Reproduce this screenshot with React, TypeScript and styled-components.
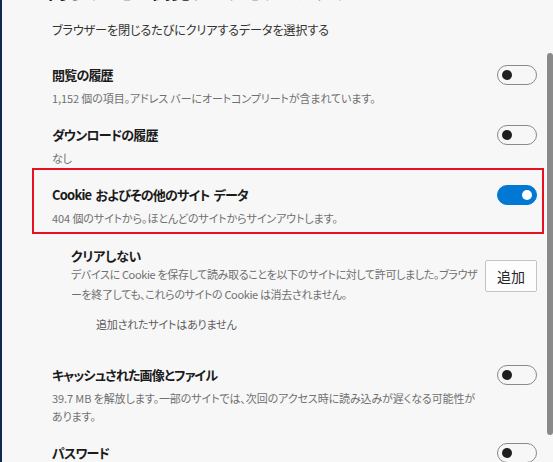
import React from "react";
import styled, { createGlobalStyle } from "styled-components";

const Global = createGlobalStyle`
  html, body { margin: 0; padding: 0; background: #f7f7f7; }
  body {
    font-family: "Noto Sans CJK JP", "Noto Sans", sans-serif;
    font-feature-settings: "palt";
    color: #1b1b1b;
    overflow: hidden;
  }
`;

const Frame = styled.div`
  display: flex;
  width: 553px;
  height: 462px;
  overflow: hidden;
  background: #f7f7f7;
`;

const EdgeStrip = styled.div`
  width: 2px;
  flex: none;
  background: #102a4c;
`;

const Content = styled.main`
  flex: 1;
  min-width: 0;
  padding: 0 3px 0 30px;
  display: flex;
  flex-direction: column;
`;

const ScrollTrack = styled.div`
  width: 6px;
  flex: none;
  padding-top: 53px;
`;

const ScrollThumb = styled.div`
  height: 382px;
  background: #8a8a8a;
  border-radius: 3px;
`;

const PageTitle = styled.h2`
  margin: -23px 0 0 16px;
  font-size: 19px;
  line-height: 28px;
  font-weight: 600;
  color: #1b1b1b;
  white-space: nowrap;
`;

const Intro = styled.p`
  margin: 15px 0 6.5px 20px;
  font-size: 12.2px;
  line-height: 20px;
  letter-spacing: -0.2px;
  color: #333;
`;

const Row = styled.section<{ $highlighted?: boolean }>`
  display: grid;
  grid-template-columns: 1fr auto;
  column-gap: 16px;
  align-items: start;
  padding: ${(p) => (p.$highlighted ? "15px 5px 5px 18px" : "18px 7px 0 20px")};
  border: ${(p) => (p.$highlighted ? "2px solid #e81123" : "none")};
  margin-top: ${(p) => (p.$highlighted ? "1.5px" : "0")};
`;

const Texts = styled.div`
  display: flex;
  flex-direction: column;
  gap: 4px;
  min-width: 0;
`;

const Title = styled.div`
  font-size: 13px;
  line-height: 20px;
  font-weight: 600;
  letter-spacing: -0.8px;
  word-spacing: 2px;
  color: #1b1b1b;
`;

const Sub = styled.div`
  font-size: 11px;
  line-height: 18px;
  letter-spacing: -0.1px;
  color: #707070;
`;

const Toggle = styled.div<{ $on?: boolean }>`
  width: 40px;
  height: 20px;
  box-sizing: border-box;
  border-radius: 10px;
  border: 1px solid ${(p) => (p.$on ? "#0078d4" : "#8a8a8a")};
  background: ${(p) => (p.$on ? "#0078d4" : "transparent")};
  display: flex;
  align-items: center;
  justify-content: ${(p) => (p.$on ? "flex-end" : "flex-start")};
  padding: 0 4px;
  &::after {
    content: "";
    width: 10px;
    height: 10px;
    border-radius: 50%;
    background: ${(p) => (p.$on ? "#ffffff" : "#1f1f1f")};
  }
`;

const SubSection = styled.section`
  padding: 14px 7px 12.5px 39px;
  display: flex;
  flex-direction: column;
`;

const ExceptionHead = styled.div`
  display: flex;
  align-items: center;
  gap: 0;
`;

const ExceptionTexts = styled.div`
  flex: 1;
  min-width: 0;
`;

const ExceptionTitle = styled.div`
  font-size: 13px;
  line-height: 16px;
  font-weight: 600;
  letter-spacing: -0.3px;
  color: #1b1b1b;
`;

const ExceptionDesc = styled.div`
  font-size: 11px;
  line-height: 20px;
  letter-spacing: -0.35px;
  color: #707070;
`;

const AddButton = styled.button`
  width: 52px;
  height: 32px;
  flex: none;
  box-sizing: border-box;
  border: 1px solid #c4c4c4;
  border-radius: 2px;
  background: #fdfdfd;
  font-family: inherit;
  font-feature-settings: "palt";
  font-size: 14px;
  color: #262626;
  padding: 0;
`;

const EmptyNote = styled.div`
  margin: 10px 0 0 25px;
  font-size: 11px;
  line-height: 20px;
  letter-spacing: -0.2px;
  color: #5c5c5c;
`;

type Item = { title: string; sub: string; on?: boolean; highlighted?: boolean };

const itemsTop: Item[] = [
  { title: "閲覧の履歴", sub: "1,152 個の項目。アドレス バーにオートコンプリートが含まれています。" },
  { title: "ダウンロードの履歴", sub: "なし" },
  {
    title: "Cookie およびその他のサイト データ",
    sub: "404 個のサイトから。ほとんどのサイトからサインアウトします。",
    on: true,
    highlighted: true,
  },
];

const itemsBottom: Item[] = [
  {
    title: "キャッシュされた画像とファイル",
    sub: "39.7 MB を解放します。一部のサイトでは、次回のアクセス時に読み込みが遅くなる可能性があります。",
  },
  { title: "パスワード", sub: "なし" },
];

function SettingRow({ item }: { item: Item }) {
  return (
    <Row $highlighted={item.highlighted}>
      <Texts>
        <Title>{item.title}</Title>
        <Sub>{item.sub}</Sub>
      </Texts>
      <Toggle $on={item.on} role="switch" aria-checked={!!item.on} />
    </Row>
  );
}

export default function App() {
  return (
    <>
      <Global />
      <Frame>
        <EdgeStrip />
        <Content>
          <PageTitle>閉じるときに閲覧データをクリアする</PageTitle>
          <Intro>ブラウザーを閉じるたびにクリアするデータを選択する</Intro>
          {itemsTop.map((it) => (
            <SettingRow key={it.title} item={it} />
          ))}
          <SubSection>
            <ExceptionHead>
              <ExceptionTexts>
                <ExceptionTitle>クリアしない</ExceptionTitle>
                <ExceptionDesc>
                  デバイスに Cookie を保存して読み取ることを以下のサイトに対して許可しました。ブラウザーを終了しても、これらのサイトの Cookie は消去されません。
                </ExceptionDesc>
              </ExceptionTexts>
              <AddButton>追加</AddButton>
            </ExceptionHead>
            <EmptyNote>追加されたサイトはありません</EmptyNote>
          </SubSection>
          {itemsBottom.map((it) => (
            <SettingRow key={it.title} item={it} />
          ))}
        </Content>
        <ScrollTrack>
          <ScrollThumb />
        </ScrollTrack>
      </Frame>
    </>
  );
}
